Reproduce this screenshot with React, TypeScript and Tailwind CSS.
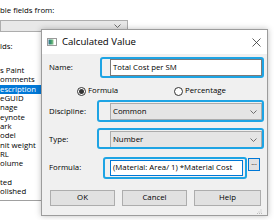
import React from "react";

function Chevron() {
  return (
    <svg width="7" height="4" viewBox="0 0 7 4" className="shrink-0">
      <path d="M0.5 0.5 L3.5 3.5 L6.5 0.5" fill="none" stroke="#606060" strokeWidth="0.9" />
    </svg>
  );
}

function Annot({ className }: { className: string }) {
  return (
    <span
      className={
        "pointer-events-none absolute rounded-[3px] border-[2.5px] border-[#1ea4e4] " + className
      }
    />
  );
}

function Radio({ checked }: { checked: boolean }) {
  return (
    <span className="flex h-[9px] w-[9px] shrink-0 items-center justify-center rounded-full border border-[#333] bg-white">
      {checked ? <span className="h-[5px] w-[5px] rounded-full bg-[#333]" /> : null}
    </span>
  );
}

const listItems: { t: string; sel?: boolean }[] = [
  { t: "s Paint" },
  { t: "omments" },
  { t: "escription", sel: true },
  { t: "eGUID" },
  { t: "nage" },
  { t: "eynote" },
  { t: "ark" },
  { t: "odel" },
  { t: "nit weight" },
  { t: "RL" },
  { t: "olume" },
  { t: "\u00a0" },
  { t: "ted" },
  { t: "olished" },
];

export default function App() {
  return (
    <div className="relative h-[220px] w-[274px] overflow-hidden bg-white font-['Open_Sans','Noto_Sans',sans-serif] text-[7.8px] text-black">
      {/* background window content */}
      <div className="flex flex-col">
        <div className="mt-[5px] h-[10px] leading-[10px]">ble fields from:</div>
        <div className="mt-[5px] flex h-[12px] w-[128px] items-center justify-end border border-[#adadad] bg-[#e8e8e8] pr-[6px]">
          <Chevron />
        </div>
        <div className="mt-[9px] h-[10px] leading-[10px]">lds:</div>
        <div className="mt-[15px] w-[60px] border-b border-[#a0a0a0] pb-[3px]">
          {listItems.map((it, i) => (
            <div
              key={i}
              className={
                it.sel
                  ? "h-[9.35px] bg-[#0078d7] leading-[9.35px] text-white"
                  : "h-[9.35px] leading-[9.35px]"
              }
            >
              {it.t}
            </div>
          ))}
        </div>
      </div>

      {/* dialog */}
      <div className="absolute left-[41px] top-[29px] flex h-[187px] w-[227px] flex-col border border-[#9c9c9c] bg-[#f0f0f0] shadow-[0_0_6px_rgba(0,0,0,0.25)]">
        {/* title bar */}
        <div className="flex h-[24px] shrink-0 items-center bg-white pl-[5px] pr-[6px]">
          <svg width="10" height="8" viewBox="0 0 10 8" className="shrink-0">
            <defs>
              <linearGradient id="g" x1="0" y1="0" x2="1" y2="0">
                <stop offset="0" stopColor="#2f6f8f" />
                <stop offset="0.5" stopColor="#3c9a6a" />
                <stop offset="1" stopColor="#8fc88f" />
              </linearGradient>
            </defs>
            <rect x="0.5" y="0.5" width="9" height="7" fill="#fff" stroke="#9a9a9a" strokeWidth="1" />
            <rect x="1.5" y="1.5" width="5" height="5" fill="url(#g)" />
          </svg>
          <span className="ml-[5px] text-[9.6px] leading-[12px]">Calculated Value</span>
          <svg width="9" height="9" viewBox="0 0 9 9" className="ml-auto shrink-0">
            <path d="M0.5 0.5 L8.5 8.5 M8.5 0.5 L0.5 8.5" stroke="#333" strokeWidth="0.8" />
          </svg>
        </div>

        {/* body */}
        <div className="flex flex-1 flex-col pr-[5px]">
          {/* Name */}
          <div className="mt-[5px] flex h-[17px] items-center">
            <div className="w-[68px] shrink-0 pl-[7px]">Name:</div>
            <div className="relative h-full flex-1">
              <Annot className="-bottom-[2px] -left-[10px] -right-[2px] -top-[2px]" />
              <div className="flex h-full items-center border border-[#7a7a7a] bg-white pl-[2px]">
                Total Cost per SM
              </div>
            </div>
          </div>

          {/* radios */}
          <div className="mt-[10px] flex h-[10px] items-center pl-[35px]">
            <div className="flex w-[97px] items-center gap-[2px]">
              <Radio checked />
              <span>Formula</span>
            </div>
            <div className="flex items-center gap-[2px]">
              <Radio checked={false} />
              <span>Percentage</span>
            </div>
          </div>

          {/* Discipline */}
          <div className="mt-[7px] flex h-[17px] items-center">
            <div className="w-[68px] shrink-0 pl-[7px]">Discipline:</div>
            <div className="relative h-full flex-1">
              <Annot className="-bottom-[2px] -left-[13px] -right-[2px] -top-[3px]" />
              <div className="flex h-full items-center justify-between border border-[#acacac] bg-[#e5e5e5] pl-[2px] pr-[4px]">
                <span>Common</span>
                <Chevron />
              </div>
            </div>
          </div>

          {/* Type */}
          <div className="mt-[11px] flex h-[17px] items-center">
            <div className="w-[68px] shrink-0 pl-[7px]">Type:</div>
            <div className="relative h-full flex-1">
              <Annot className="-bottom-[1px] -left-[13px] -right-[2px] -top-[3px]" />
              <div className="flex h-full items-center justify-between border border-[#acacac] bg-[#e5e5e5] pl-[2px] pr-[4px]">
                <span>Number</span>
                <Chevron />
              </div>
            </div>
          </div>

          {/* Formula */}
          <div className="mt-[12px] flex h-[16px] items-center">
            <div className="w-[68px] shrink-0 pl-[7px]">Formula:</div>
            <div className="relative h-full w-[133px] shrink-0">
              <Annot className="-bottom-[3px] -left-[7px] -right-[4px] -top-[3px]" />
              <div className="flex h-full items-center overflow-hidden whitespace-nowrap border border-[#0078d7] bg-white pl-[2px]">
                (Material: Area/ 1) *Material Cost
              </div>
            </div>
            <div className="-mt-[2px] ml-[5px] flex h-[13px] w-[12px] items-center justify-center self-start border border-[#0078d7] bg-[#e1e1e1] pb-[3px] text-[7px]">
              ...
            </div>
          </div>

          {/* buttons */}
          <div className="mt-[14px] flex h-[16px] gap-[7px] pl-[8px]">
            <div className="flex w-[65px] items-center justify-center border border-[#adadad] bg-[#e1e1e1]">OK</div>
            <div className="flex w-[65px] items-center justify-center border border-[#adadad] bg-[#e1e1e1]">Cancel</div>
            <div className="flex w-[67px] items-center justify-center border border-[#adadad] bg-[#e1e1e1]">Help</div>
          </div>

          <div className="mt-auto flex justify-end pb-[1px]">
            <svg width="5" height="5" viewBox="0 0 5 5">
              <rect x="3.5" y="0.5" width="1" height="1" fill="#bbb" />
              <rect x="1.5" y="2.5" width="1" height="1" fill="#bbb" />
              <rect x="3.5" y="2.5" width="1" height="1" fill="#bbb" />
              <rect x="0" y="4" width="1" height="1" fill="#bbb" />
              <rect x="2" y="4" width="1" height="1" fill="#bbb" />
              <rect x="4" y="4" width="1" height="1" fill="#bbb" />
            </svg>
          </div>
        </div>
      </div>
    </div>
  );
}
